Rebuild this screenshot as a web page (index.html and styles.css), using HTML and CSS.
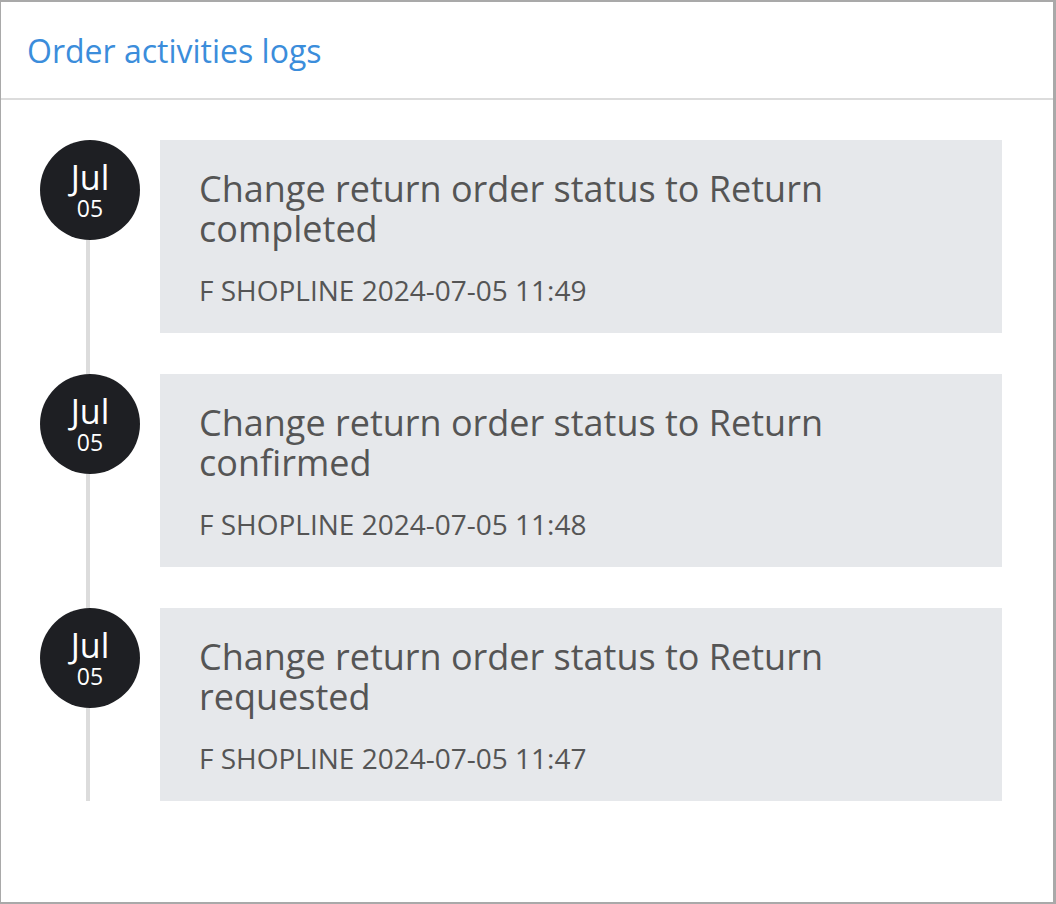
FILE: index.html
```html
<!DOCTYPE html>
<html lang="en">
  <head>
    <meta charset="UTF-8" />
    <meta name="viewport" content="width=device-width, initial-scale=1.0" />
    <title>Order activities logs</title>
    <link rel="stylesheet" href="styles.css">
  </head>
  <body>
    <div class="panel">
      <header class="panel-head">
        <h2>Order activities logs</h2>
      </header>

      <section class="timeline">
        <div class="item">
          <div class="side">
            <div class="date"><span class="month">Jul</span><span class="day">05</span></div>
            <div class="line"></div>
          </div>
          <div class="body">
            <div class="card">
              <p class="title">Change return order status to Return completed</p>
              <p class="meta">F SHOPLINE 2024-07-05 11:49</p>
            </div>
          </div>
        </div>

        <div class="item">
          <div class="side">
            <div class="date"><span class="month">Jul</span><span class="day">05</span></div>
            <div class="line"></div>
          </div>
          <div class="body">
            <div class="card">
              <p class="title">Change return order status to Return confirmed</p>
              <p class="meta">F SHOPLINE 2024-07-05 11:48</p>
            </div>
          </div>
        </div>

        <div class="item">
          <div class="side">
            <div class="date"><span class="month">Jul</span><span class="day">05</span></div>
            <div class="line"></div>
          </div>
          <div class="body">
            <div class="card">
              <p class="title">Change return order status to Return requested</p>
              <p class="meta">F SHOPLINE 2024-07-05 11:47</p>
            </div>
          </div>
        </div>
      </section>
    </div>
  </body>
</html>
```

FILE: styles.css
```css
html,
body {
  margin: 0;
  height: 100%;
}

body {
  font-family: "Open Sans", "Noto Sans", sans-serif;
  background: #fff;
}

.panel {
  box-sizing: border-box;
  height: 904px;
  border: 2px solid #a9a9a9;
  border-left-width: 1px;
  border-right-width: 3px;
}

.panel-head {
  height: 96px;
  border-bottom: 2px solid #dcdcdc;
  padding-left: 26px;
  display: flex;
  align-items: center;
}

.panel-head h2 {
  margin: 0;
  font-size: 32px;
  font-weight: 400;
  color: #3b8ddb;
}

.timeline {
  padding: 40px 51px 0 39px;
}

.item {
  display: flex;
}

.side {
  width: 100px;
  flex: none;
  display: flex;
  flex-direction: column;
  align-items: center;
}

.date {
  width: 100px;
  height: 100px;
  border-radius: 50%;
  background: #1e1f23;
  color: #fff;
  text-align: center;
  padding-top: 21px;
  box-sizing: border-box;
}

.month {
  display: block;
  font-size: 34px;
  line-height: 32px;
}

.day {
  display: block;
  margin-top: 4px;
  font-size: 23px;
  line-height: 22px;
}

.line {
  flex: 1;
  width: 4px;
  background: #dcdcdc;
  margin-left: -4px;
}

.body {
  flex: 1;
  margin-left: 20px;
  padding-bottom: 41px;
}

.item:last-child .body {
  padding-bottom: 0;
}

.card {
  background: #e6e8eb;
  padding: 29px 39px 27px;
  color: #555;
}

.title {
  margin: 0;
  font-size: 36px;
  line-height: 40px;
}

.meta {
  margin: 25px 0 0;
  font-size: 28px;
  line-height: 32px;
}
```
